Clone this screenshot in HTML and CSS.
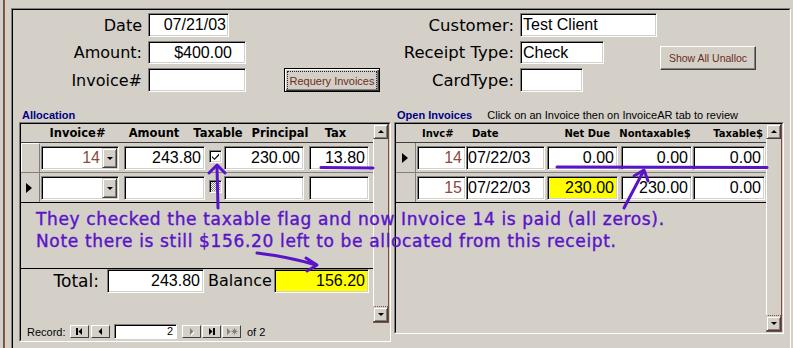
FILE: index.html
```html
<!DOCTYPE html>
<html>
<head>
<meta charset="utf-8">
<title>Receipt</title>
<link rel="stylesheet" href="styles.css">
</head>
<body>
<div class="screen">
  <div class="rail"><div class="rail-in">
    <div class="form"><div class="form-in">

      <div class="top">
        <div class="fgrid left">
          <span class="lbl">Date</span><div class="box val w81 r pr2">07/21/03</div><span></span>
          <span class="lbl">Amount:</span><div class="box val w98 r pr13">$400.00</div><span></span>
          <span class="lbl">Invoice#</span><div class="box val w98"></div>
          <button class="btn default"><span class="focus">Requery Invoices</span></button>
        </div>
        <div class="fgrid right">
          <span class="lbl">Customer:</span><div class="box val w137">Test Client</div>
          <span class="lbl">Receipt Type:</span><div class="box val w84">Check</div>
          <span class="lbl">CardType:</span><div class="box val w63"></div>
        </div>
        <button class="btn showall">Show All Unalloc</button>
      </div>

      <div class="subs">
        <section class="sub alloc">
          <div class="subtitle">Allocation</div>
          <div class="frame"><div class="frame-in">
            <div class="sheet">
              <div class="main">
                <div class="hdr ahdr">
                  <span class="c1">Invoice#</span><span class="c2">Amount</span><span class="c3">Taxable</span><span class="c4">Principal</span><span class="c5">Tax</span>
                </div>
                <div class="row">
                  <div class="sel raised"></div>
                  <div class="cells">
                    <div class="box combo w78"><span class="num brown">14</span><span class="drop"><i></i></span></div>
                    <div class="box val r w81 g5">243.80</div>
                    <div class="chk g4 checked"><svg viewBox="0 0 9 9" width="9" height="9"><path d="M1 4 L3.5 6.5 L8 1.5 L8 3.5 L3.5 8 L1 5.5 Z" fill="#000"/></svg></div>
                    <div class="box val r w80 g2">230.00</div>
                    <div class="box val r w60 g5">13.80</div>
                  </div>
                </div>
                <div class="row last">
                  <div class="sel"><span class="tri"></span></div>
                  <div class="cells">
                    <div class="box combo w78"><span class="num"></span><span class="drop"><i></i></span></div>
                    <div class="box val r w81 g5"></div>
                    <div class="chk g4 null"></div>
                    <div class="box val r w80 g2"></div>
                    <div class="box val r w60 g5"></div>
                  </div>
                </div>
                <div class="detail-empty"></div>
                <div class="foot">
                  <span class="lbl tl">Total:</span>
                  <div class="box val r w97">243.80</div>
                  <span class="lbl bl">Balance</span>
                  <div class="box val r w95 yellow">156.20</div>
                </div>
              </div>
              <div class="vscroll">
                <div class="sbtn up"><i></i></div>
                <div class="track"></div>
                <div class="sbtn down"><i></i></div>
              </div>
            </div>
            <div class="navbar">
              <span class="rec">Record:</span>
              <span class="nbtn first"><svg width="17" height="11" viewBox="0 0 17 11"><rect x="5" y="2" width="2" height="7" fill="#000"/><path d="M11 2 L11 9 L7.5 5.5 Z" fill="#000"/></svg></span>
              <span class="nbtn prev"><svg width="17" height="11" viewBox="0 0 17 11"><path d="M10 2 L10 9 L6.5 5.5 Z" fill="#000"/></svg></span>
              <span class="navbox">2</span>
              <span class="nbtn next"><svg width="17" height="11" viewBox="0 0 17 11"><path d="M8 3 L8 10 L11.5 6.5 Z" fill="#fff"/><path d="M7 2 L7 9 L10.5 5.5 Z" fill="#808080"/></svg></span>
              <span class="nbtn lastb"><svg width="17" height="11" viewBox="0 0 17 11"><path d="M6 2 L6 9 L9.5 5.5 Z" fill="#000"/><rect x="10" y="2" width="2" height="7" fill="#000"/></svg></span>
              <span class="nbtn newb"><svg width="17" height="11" viewBox="0 0 17 11"><path d="M4 2 L4 9 L7.5 5.5 Z" fill="#808080"/><path d="M11.5 2.5 V8.5 M8.5 5.5 H14.5 M9.5 3.5 L13.5 7.5 M13.5 3.5 L9.5 7.5" stroke="#808080" stroke-width="1"/></svg></span>
              <span class="of">of 2</span>
            </div>
          </div></div>
        </section>

        <section class="sub open">
          <div class="subtitle">Open Invoices <span class="hint">Click on an Invoice then on InvoiceAR tab to review</span></div>
          <div class="frame"><div class="frame-in">
            <div class="sheet osheet">
              <div class="main omain">
                <div class="hdr ohdr">
                  <span class="o1">Invc#</span><span class="o2">Date</span><span class="o3">Net Due</span><span class="o4">Nontaxable$</span><span class="o5">Taxable$</span>
                </div>
                <div class="row">
                  <div class="sel osel"><span class="tri"></span></div>
                  <div class="cells">
                    <div class="box val r w49 brown">14</div>
                    <div class="box val w79 pl1">07/22/03</div>
                    <div class="box val r w71 g2">0.00</div>
                    <div class="box val r w71 g3">0.00</div>
                    <div class="box val r w72 g1">0.00</div>
                  </div>
                </div>
                <div class="row last">
                  <div class="sel osel"></div>
                  <div class="cells">
                    <div class="box val r w49 brown">15</div>
                    <div class="box val w79 pl1">07/22/03</div>
                    <div class="box val r w71 g2 yellow">230.00</div>
                    <div class="box val r w71 g3">230.00</div>
                    <div class="box val r w72 g1">0.00</div>
                  </div>
                </div>
              </div>
              <div class="vscroll">
                <div class="sbtn up"><i></i></div>
                <div class="track"></div>
                <div class="sbtn down"><i></i></div>
              </div>
            </div>
          </div></div>
        </section>
      </div>

    </div></div>
  </div></div>

  <div class="note">They checked the taxable flag and now Invoice 14 is paid (all zeros).<br>Note there is still $156.20 left to be allocated from this receipt.</div>
  <svg class="arrows" width="793" height="348" viewBox="0 0 793 348">
    <g stroke="#5a14c8" stroke-width="3" stroke-linecap="round" stroke-linejoin="round" fill="none">
      <path d="M218 208 L217 167"/>
      <path d="M209 173 L217 165 L225 173"/>
      <path d="M321 167.5 L373 168"/>
      <path d="M557 167 L767 167.5"/>
      <path d="M624 208 L643 172"/>
      <path d="M634 176 L644 170 L648 181"/>
      <path d="M257 253 Q290 257 316 265"/>
      <path d="M306 258 L317 265 L307 271"/>
    </g>
  </svg>
</div>
</body>
</html>
```
FILE: styles.css
```css
* { box-sizing: border-box; }
html, body { margin: 0; padding: 0; }
body {
  background: #d4d0c8;
  width: 793px;
  height: 348px;
  overflow: hidden;
  font-family: "DejaVu Sans", sans-serif;
  color: #000;
}
.screen { position: relative; width: 793px; height: 348px; overflow: hidden; padding-left: 3px; }
.rail { height: 100%; border-left: 1px solid #5a5a5a; }
.rail-in { height: 100%; border-left: 1px solid #a0503a; padding: 8px 0 0 6px; }
.form {
  width: 780px; height: 400px;
  border: 1px solid; border-color: #808080 #fff #fff #808080;
}
.form-in { height: 100%; border: 1px solid; border-color: #000 #d4d0c8 #d4d0c8 #000; }

/* top fields */
.top { display: flex; align-items: flex-start; margin-top: 3px; }
.fgrid { display: grid; grid-template-rows: 24px 23px 24px; row-gap: 4px; column-gap: 6px; align-items: center; }
.fgrid.left { grid-template-columns: 129px 98px 128px; }
.fgrid.right { grid-template-columns: 119px 137px; margin-left: 15px; }
.lbl { font-family: "DejaVu Sans", sans-serif; font-size: 16px; text-align: right; white-space: nowrap; }
.fgrid.right .lbl { font-size: 16.5px; }
.box {
  height: 24px; background: #fff;
  border: 1px solid; border-color: #808080 #fff #fff #808080;
  box-shadow: inset 1px 1px 0 #000, inset -1px -1px 0 #d4d0c8;
  font-family: "Liberation Sans", Arial, sans-serif; font-size: 16px; line-height: 22px;
  padding: 0 2px 0 2px; white-space: nowrap; overflow: hidden;
}
.fgrid .box { height: 100%; }
.r { text-align: right; padding-right: 3px; }
.pr2 { padding-right: 2px; }
.pr13 { padding-right: 13px; }
.pl1 { padding-left: 1px; }
.w49 { width: 49px; } .w60 { width: 60px; } .w63 { width: 63px; } .w71 { width: 71px; } .w72 { width: 72px; }
.w78 { width: 78px; } .w79 { width: 79px; } .w80 { width: 80px; } .w81 { width: 81px; } .w84 { width: 84px; }
.w95 { width: 95px; } .w97 { width: 97px; } .w98 { width: 98px; } .w137 { width: 137px; }
.g1 { margin-left: 1px; } .g2 { margin-left: 2px; } .g3 { margin-left: 3px; } .g4 { margin-left: 4px; } .g5 { margin-left: 5px; }
.yellow { background: #ffff00; }
.brown { color: #8a4a3a; }

.btn {
  font-family: "Liberation Sans", Arial, sans-serif; font-size: 11px; color: #6b2d1e;
  background: #d4d0c8; height: 24px; width: 96px; padding: 0;
  border: 1px solid; border-color: #fff #404040 #404040 #fff;
  box-shadow: inset -1px -1px 0 #808080;
  white-space: nowrap;
}
.btn.default {
  justify-self: end; border: 1px solid #000; padding: 1px;
  box-shadow: inset 1px 1px 0 #fff, inset -1px -1px 0 #404040, inset -2px -2px 0 #808080;
}
.btn .focus { display: flex; align-items: center; justify-content: center; height: 100%; margin: 1px; border: 1px dotted #222; }
.btn.showall { margin: 33px 0 0 3px; font-size: 10.5px; }

/* subforms */
.subs { display: flex; gap: 3px; margin: 16px 0 0 6px; }
.sub.alloc { width: 372px; }
.sub.open { width: 390px; }
.subtitle {
  height: 14px; line-height: 14px; padding-left: 3px;
  font-family: "Liberation Sans", Arial, sans-serif; font-size: 11px; font-weight: bold; color: #000080;
  white-space: nowrap;
}
.subtitle .hint { font-weight: normal; color: #000; margin-left: 12px; }
.frame { border: 1px solid; border-color: #808080 #fff #fff #808080; }
.frame-in { border: 1px solid; border-color: #000 #d4d0c8 #d4d0c8 #000; }
.alloc .frame { height: 220px; }
.open .frame { height: 212px; }
.sheet { display: flex; height: 199px; }
.osheet { height: 208px; }
.main { width: 352px; display: flex; flex-direction: column; }
.omain { width: 370px; }

.hdr { height: 19px; border-bottom: 1px solid #404040; display: flex; align-items: center; font-weight: bold; white-space: nowrap; }
.ahdr { font-size: 11.5px; padding-left: 16px; }
.ahdr span { text-align: center; }
.ahdr .c1 { width: 81px; } .ahdr .c2 { width: 72px; } .ahdr .c3 { width: 56px; } .ahdr .c4 { width: 68px; } .ahdr .c5 { width: 43px; }
.ohdr { font-size: 10px; padding-left: 26px; }
.ohdr .o1 { width: 50px; } .ohdr .o2 { width: 70px; }
.ohdr .o3 { width: 68px; text-align: right; }
.ohdr .o4 { width: 90px; text-align: center; }
.ohdr .o5 { width: 63px; text-align: right; }

.row { display: flex; height: 30px; border-bottom: 1px solid #808080; }
.row.last { border-bottom-color: #000; }
.sel { width: 19px; border-right: 1px solid #808080; display: flex; align-items: center; justify-content: center; }
.osel { width: 20px; }
.sel.raised { border-top: 1px solid #fff; border-left: 1px solid #fff; }
.tri { width: 0; height: 0; border-top: 5px solid transparent; border-bottom: 5px solid transparent; border-left: 6px solid #000; margin-left: -2px; }
.cells { display: flex; align-items: flex-start; padding: 3px 0 0 1px; }
.combo { display: flex; padding: 0; }
.combo .num { flex: 1; text-align: right; padding-right: 2px; }
.drop {
  width: 15px; height: 20px; margin: 1px 1px 0 0; background: #d4d0c8;
  border: 1px solid; border-color: #d4d0c8 #404040 #404040 #d4d0c8;
  box-shadow: inset 1px 1px 0 #fff, inset -1px -1px 0 #808080;
  display: flex; align-items: center; justify-content: center;
}
.drop i, .sbtn i { width: 0; height: 0; border-left: 3px solid transparent; border-right: 3px solid transparent; border-top: 3px solid #000; display: block; }
.chk {
  width: 13px; height: 13px; margin-top: 4px; background: #fff;
  border: 1px solid; border-color: #808080 #fff #fff #808080;
  box-shadow: inset 1px 1px 0 #000, inset -1px -1px 0 #d4d0c8;
  display: flex; align-items: center; justify-content: center;
}
.chk.null {
  background: repeating-conic-gradient(#808080 0 25%, #fff 0 50%) 0 0 / 2px 2px;
}
.chk + .box { margin-left: 2px; }
.detail-empty { height: 65px; }
.foot { flex: 1; border-top: 1px solid #000; display: flex; align-items: flex-start; }
.foot .box { height: 24px; }
.foot .tl { width: 80px; padding-right: 2px; line-height: 24px; font-size: 17px; }
.foot .box.w97 { margin-left: 6px; }
.foot .bl { margin-left: 4px; width: 66px; text-align: left; line-height: 24px; }

.vscroll { width: 16px; display: flex; flex-direction: column; border-right: 1px solid #8a4a38; border-bottom: 1px solid #8a4a38; }
.sbtn {
  height: 15px; background: #d4d0c8;
  border: 1px solid; border-color: #d4d0c8 #404040 #404040 #d4d0c8;
  box-shadow: inset 1px 1px 0 #fff, inset -1px -1px 0 #808080;
  display: flex; align-items: center; justify-content: center;
}
.sbtn.up i { border-top: 0; border-bottom: 3px solid #000; }
.track { flex: 1; background: #d4d0c8; border-left: 1px solid #fff; border-bottom: 1px dotted #8a4a38; }

.navbar { height: 17px; display: flex; align-items: center; padding-left: 6px; font-family: "Liberation Sans", Arial, sans-serif; font-size: 11px; }
.rec { width: 43px; }
.nbtn {
  width: 19px; height: 13px; background: #d4d0c8;
  border: 1px solid; border-color: #fff #404040 #404040 #fff;
  display: flex; align-items: center; justify-content: center;
}
.nbtn svg { display: block; }
.nbtn.prev { margin-left: 2px; }
.navbox {
  width: 63px; height: 15px; margin: 0 5px 0 4px; background: #fff; text-align: right; padding-right: 3px; line-height: 13px;
  border: 1px solid; border-color: #808080 #fff #fff #808080; box-shadow: inset 1px 1px 0 #000;
}
.nbtn.lastb, .nbtn.newb { margin-left: 1px; }
.of { margin-left: 6px; }

/* annotations overlay */
.note {
  position: absolute; left: 36px; top: 208px;
  font-family: "DejaVu Sans", sans-serif; font-size: 17px; line-height: 22px; letter-spacing: 0.65px;
  color: #5a14c8; white-space: nowrap;
  -webkit-text-stroke: 0.4px #5a14c8;
}
.arrows { position: absolute; left: 0; top: 0; pointer-events: none; }
```
